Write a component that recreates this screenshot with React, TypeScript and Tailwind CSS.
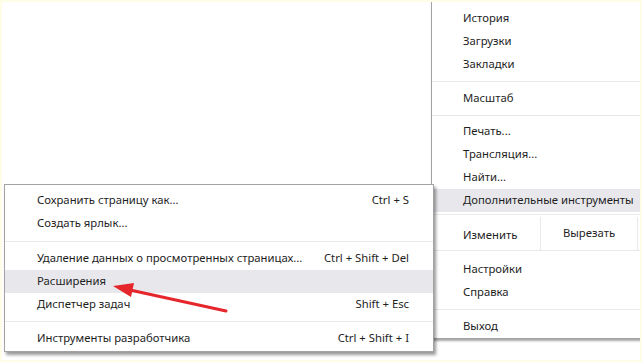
import React from "react";

type Item = { label: string; shortcut?: string; active?: boolean };

const font = { fontFamily: '"Noto Sans", "Open Sans", sans-serif' };

function Row({ item, pl }: { item: Item; pl: string }) {
  return (
    <div
      className={`flex h-[23px] items-center justify-between whitespace-nowrap pr-[24px] ${pl} ${
        item.active ? "bg-[#e8e8ec]" : ""
      }`}
    >
      <span>{item.label}</span>
      {item.shortcut && <span>{item.shortcut}</span>}
    </div>
  );
}

function Sep({ h }: { h: string }) {
  return (
    <div className={`flex ${h} items-center`}>
      <div className="h-px w-full bg-[#e9e9e9]" />
    </div>
  );
}

export default function App() {
  return (
    <div
      className="relative h-[362px] w-[642px] overflow-hidden border-2 border-[#fdfde8] bg-white text-[11.3px] text-[#1e1e1e]"
      style={font}
    >
      {/* MAIN MENU */}
      <div className="absolute left-[429px] top-[-2px] w-[212px] border-b border-l border-[#a3a3a3] bg-white pt-[7px] shadow-[1px_2px_2px_rgba(0,0,0,0.35)]">
        <Row item={{ label: "История" }} pl="pl-[31px]" />
        <Row item={{ label: "Загрузки" }} pl="pl-[31px]" />
        <Row item={{ label: "Закладки" }} pl="pl-[31px]" />
        <Sep h="h-[11px]" />
        <div className="flex h-[23px] items-center pl-[31px]">Масштаб</div>
        <Sep h="h-[10px]" />
        <Row item={{ label: "Печать..." }} pl="pl-[31px]" />
        <Row item={{ label: "Трансляция..." }} pl="pl-[31px]" />
        <Row item={{ label: "Найти..." }} pl="pl-[31px]" />
        <div className="flex h-[23px] items-center whitespace-nowrap bg-[#e8e8ec] pl-[31px]">
          Дополнительные инструменты
        </div>
        <Sep h="h-[5px]" />
        {/* EDIT ROW */}
        <div className="flex h-[34px] border-b border-[#e9e9e9]">
          <div className="flex w-[108px] items-center pl-[31px] pt-[3px]">Изменить</div>
          <div className="flex w-[97px] items-center justify-center border-l border-[#e9e9e9]">
            Вырезать
          </div>
          <div className="flex-1 border-l border-[#e9e9e9]" />
        </div>
        <div className="h-[7px]" />
        <Row item={{ label: "Настройки" }} pl="pl-[31px]" />
        <Row item={{ label: "Справка" }} pl="pl-[31px]" />
        <Sep h="h-[11px]" />
        <Row item={{ label: "Выход" }} pl="pl-[31px]" />
      </div>

      {/* SUBMENU */}
      <div className="absolute left-[2px] top-[182px] w-[430px] border border-[#a3a3a3] bg-white pb-[1px] pt-[4px] shadow-[2px_3px_3px_rgba(0,0,0,0.4)]">
        <Row item={{ label: "Сохранить страницу как...", shortcut: "Ctrl + S" }} pl="pl-[32px]" />
        <Row item={{ label: "Создать ярлык..." }} pl="pl-[32px]" />
        <Sep h="h-[12px]" />
        <Row
          item={{
            label: "Удаление данных о просмотренных страницах...",
            shortcut: "Ctrl + Shift + Del",
          }}
          pl="pl-[32px]"
        />
        <Row item={{ label: "Расширения", active: true }} pl="pl-[32px]" />
        <Row item={{ label: "Диспетчер задач", shortcut: "Shift + Esc" }} pl="pl-[32px]" />
        <Sep h="h-[11px]" />
        <Row item={{ label: "Инструменты разработчика", shortcut: "Ctrl + Shift + I" }} pl="pl-[32px]" />
      </div>

      {/* ARROW */}
      <svg className="pointer-events-none absolute left-[-2px] top-[-2px]" width="642" height="362">
        <line x1="226" y1="311" x2="130" y2="290" stroke="#e5262b" strokeWidth="3" strokeLinecap="round" />
        <polygon points="113,286 134,283 131,297" fill="#e5262b" />
      </svg>
    </div>
  );
}
